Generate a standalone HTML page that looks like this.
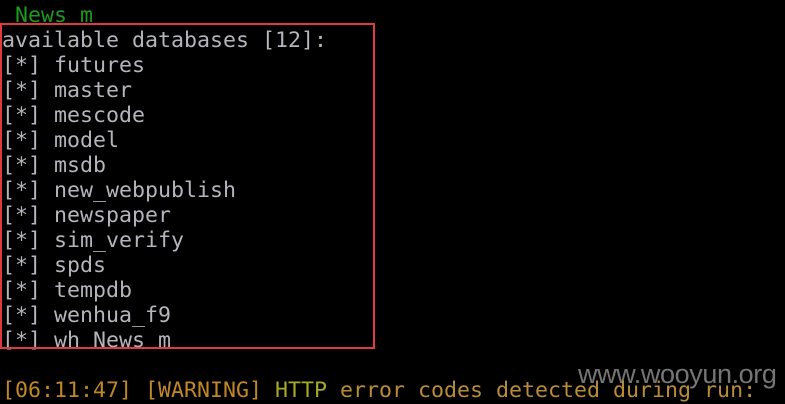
<!DOCTYPE html>
<html><head><style>
body{margin:0;background:#000;width:785px;height:404px;overflow:hidden;position:relative;font-family:"DejaVu Sans Mono","Liberation Mono",monospace;font-size:21.6px;}
.l{position:absolute;left:2px;white-space:pre;line-height:25px;color:#b4b4bc;}
#box{position:absolute;left:0;top:23px;width:371px;height:322px;border:2px solid #e03a40;}
#wm{position:absolute;left:578px;top:359px;font-family:"Liberation Sans","DejaVu Sans",sans-serif;font-size:27px;color:#8a8a8a;opacity:.85;letter-spacing:-0.4px;}
</style></head><body>
<div class="l" style="top:3px;left:15px;color:#1c9a1c">News m</div>
<div class="l" style="top:28px">available databases [12]:</div>
<div class="l" style="top:53px">[*] futures</div>
<div class="l" style="top:78px">[*] master</div>
<div class="l" style="top:103px">[*] mescode</div>
<div class="l" style="top:128px">[*] model</div>
<div class="l" style="top:153px">[*] msdb</div>
<div class="l" style="top:178px">[*] new_webpublish</div>
<div class="l" style="top:203px">[*] newspaper</div>
<div class="l" style="top:228px">[*] sim_verify</div>
<div class="l" style="top:253px">[*] spds</div>
<div class="l" style="top:278px">[*] tempdb</div>
<div class="l" style="top:303px">[*] wenhua_f9</div>
<div class="l" style="top:328px">[*] wh News m</div>
<div id="box"></div>
<div id="wm">www.wooyun.org</div>
<div class="l" style="top:378px;color:#c0862a">[06:11:47] [WARNING] <span style="color:#a8a828">HTTP</span> <span style="color:#b88c38">error codes detected during run:</span></div>
</body></html>
